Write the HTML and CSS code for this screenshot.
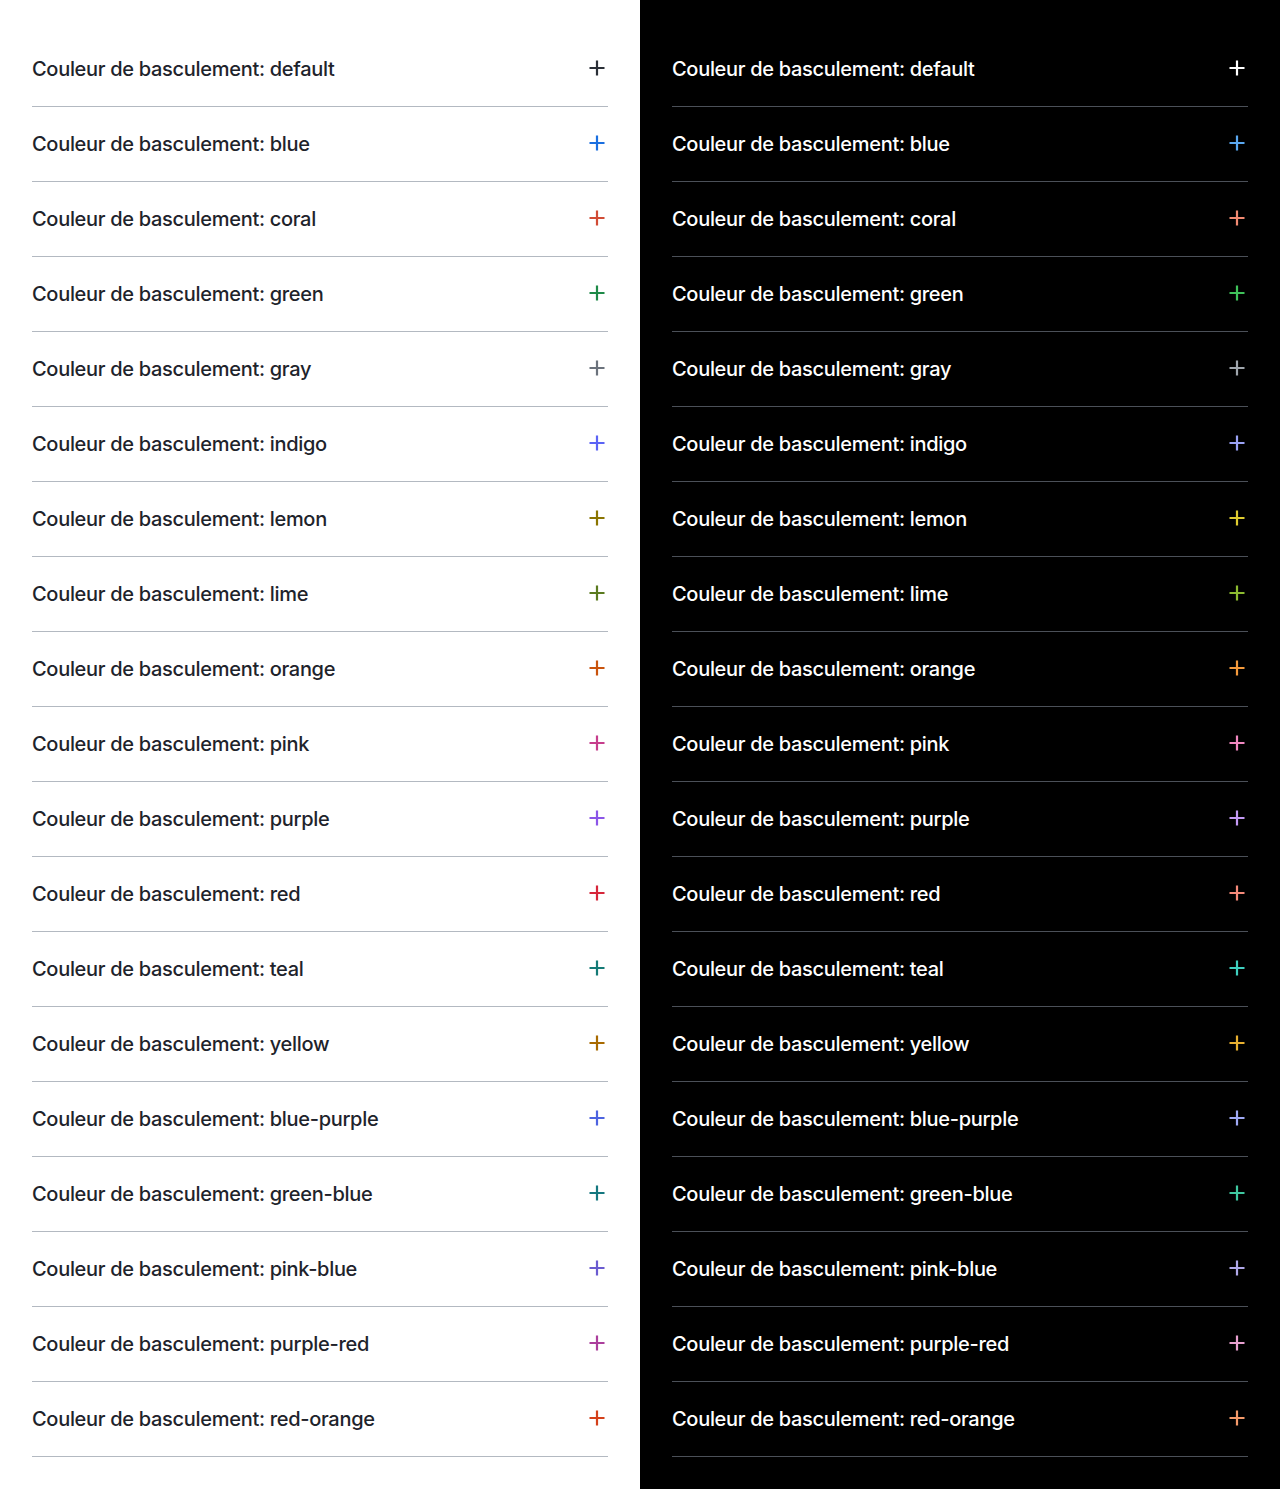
FILE: index.html
```html
<!DOCTYPE html>
<html lang="fr">
<head>
<meta charset="utf-8">
<title>Couleur de basculement</title>
<link rel="stylesheet" href="styles.css">
</head>
<body>
<div class="page">
  <section class="panel light">
    <div class="row c-default"><span class="label">Couleur de basculement: default</span><svg class="plus" viewBox="0 0 16 16"><path d="M8 0.5v15M0.5 8h15"/></svg></div>
    <div class="row c-blue"><span class="label">Couleur de basculement: blue</span><svg class="plus" viewBox="0 0 16 16"><path d="M8 0.5v15M0.5 8h15"/></svg></div>
    <div class="row c-coral"><span class="label">Couleur de basculement: coral</span><svg class="plus" viewBox="0 0 16 16"><path d="M8 0.5v15M0.5 8h15"/></svg></div>
    <div class="row c-green"><span class="label">Couleur de basculement: green</span><svg class="plus" viewBox="0 0 16 16"><path d="M8 0.5v15M0.5 8h15"/></svg></div>
    <div class="row c-gray"><span class="label">Couleur de basculement: gray</span><svg class="plus" viewBox="0 0 16 16"><path d="M8 0.5v15M0.5 8h15"/></svg></div>
    <div class="row c-indigo"><span class="label">Couleur de basculement: indigo</span><svg class="plus" viewBox="0 0 16 16"><path d="M8 0.5v15M0.5 8h15"/></svg></div>
    <div class="row c-lemon"><span class="label">Couleur de basculement: lemon</span><svg class="plus" viewBox="0 0 16 16"><path d="M8 0.5v15M0.5 8h15"/></svg></div>
    <div class="row c-lime"><span class="label">Couleur de basculement: lime</span><svg class="plus" viewBox="0 0 16 16"><path d="M8 0.5v15M0.5 8h15"/></svg></div>
    <div class="row c-orange"><span class="label">Couleur de basculement: orange</span><svg class="plus" viewBox="0 0 16 16"><path d="M8 0.5v15M0.5 8h15"/></svg></div>
    <div class="row c-pink"><span class="label">Couleur de basculement: pink</span><svg class="plus" viewBox="0 0 16 16"><path d="M8 0.5v15M0.5 8h15"/></svg></div>
    <div class="row c-purple"><span class="label">Couleur de basculement: purple</span><svg class="plus" viewBox="0 0 16 16"><path d="M8 0.5v15M0.5 8h15"/></svg></div>
    <div class="row c-red"><span class="label">Couleur de basculement: red</span><svg class="plus" viewBox="0 0 16 16"><path d="M8 0.5v15M0.5 8h15"/></svg></div>
    <div class="row c-teal"><span class="label">Couleur de basculement: teal</span><svg class="plus" viewBox="0 0 16 16"><path d="M8 0.5v15M0.5 8h15"/></svg></div>
    <div class="row c-yellow"><span class="label">Couleur de basculement: yellow</span><svg class="plus" viewBox="0 0 16 16"><path d="M8 0.5v15M0.5 8h15"/></svg></div>
    <div class="row c-blue-purple"><span class="label">Couleur de basculement: blue-purple</span><svg class="plus" viewBox="0 0 16 16"><path d="M8 0.5v15M0.5 8h15"/></svg></div>
    <div class="row c-green-blue"><span class="label">Couleur de basculement: green-blue</span><svg class="plus" viewBox="0 0 16 16"><path d="M8 0.5v15M0.5 8h15"/></svg></div>
    <div class="row c-pink-blue"><span class="label">Couleur de basculement: pink-blue</span><svg class="plus" viewBox="0 0 16 16"><path d="M8 0.5v15M0.5 8h15"/></svg></div>
    <div class="row c-purple-red"><span class="label">Couleur de basculement: purple-red</span><svg class="plus" viewBox="0 0 16 16"><path d="M8 0.5v15M0.5 8h15"/></svg></div>
    <div class="row c-red-orange"><span class="label">Couleur de basculement: red-orange</span><svg class="plus" viewBox="0 0 16 16"><path d="M8 0.5v15M0.5 8h15"/></svg></div>
  </section>
  <section class="panel dark">
    <div class="row c-default"><span class="label">Couleur de basculement: default</span><svg class="plus" viewBox="0 0 16 16"><path d="M8 0.5v15M0.5 8h15"/></svg></div>
    <div class="row c-blue"><span class="label">Couleur de basculement: blue</span><svg class="plus" viewBox="0 0 16 16"><path d="M8 0.5v15M0.5 8h15"/></svg></div>
    <div class="row c-coral"><span class="label">Couleur de basculement: coral</span><svg class="plus" viewBox="0 0 16 16"><path d="M8 0.5v15M0.5 8h15"/></svg></div>
    <div class="row c-green"><span class="label">Couleur de basculement: green</span><svg class="plus" viewBox="0 0 16 16"><path d="M8 0.5v15M0.5 8h15"/></svg></div>
    <div class="row c-gray"><span class="label">Couleur de basculement: gray</span><svg class="plus" viewBox="0 0 16 16"><path d="M8 0.5v15M0.5 8h15"/></svg></div>
    <div class="row c-indigo"><span class="label">Couleur de basculement: indigo</span><svg class="plus" viewBox="0 0 16 16"><path d="M8 0.5v15M0.5 8h15"/></svg></div>
    <div class="row c-lemon"><span class="label">Couleur de basculement: lemon</span><svg class="plus" viewBox="0 0 16 16"><path d="M8 0.5v15M0.5 8h15"/></svg></div>
    <div class="row c-lime"><span class="label">Couleur de basculement: lime</span><svg class="plus" viewBox="0 0 16 16"><path d="M8 0.5v15M0.5 8h15"/></svg></div>
    <div class="row c-orange"><span class="label">Couleur de basculement: orange</span><svg class="plus" viewBox="0 0 16 16"><path d="M8 0.5v15M0.5 8h15"/></svg></div>
    <div class="row c-pink"><span class="label">Couleur de basculement: pink</span><svg class="plus" viewBox="0 0 16 16"><path d="M8 0.5v15M0.5 8h15"/></svg></div>
    <div class="row c-purple"><span class="label">Couleur de basculement: purple</span><svg class="plus" viewBox="0 0 16 16"><path d="M8 0.5v15M0.5 8h15"/></svg></div>
    <div class="row c-red"><span class="label">Couleur de basculement: red</span><svg class="plus" viewBox="0 0 16 16"><path d="M8 0.5v15M0.5 8h15"/></svg></div>
    <div class="row c-teal"><span class="label">Couleur de basculement: teal</span><svg class="plus" viewBox="0 0 16 16"><path d="M8 0.5v15M0.5 8h15"/></svg></div>
    <div class="row c-yellow"><span class="label">Couleur de basculement: yellow</span><svg class="plus" viewBox="0 0 16 16"><path d="M8 0.5v15M0.5 8h15"/></svg></div>
    <div class="row c-blue-purple"><span class="label">Couleur de basculement: blue-purple</span><svg class="plus" viewBox="0 0 16 16"><path d="M8 0.5v15M0.5 8h15"/></svg></div>
    <div class="row c-green-blue"><span class="label">Couleur de basculement: green-blue</span><svg class="plus" viewBox="0 0 16 16"><path d="M8 0.5v15M0.5 8h15"/></svg></div>
    <div class="row c-pink-blue"><span class="label">Couleur de basculement: pink-blue</span><svg class="plus" viewBox="0 0 16 16"><path d="M8 0.5v15M0.5 8h15"/></svg></div>
    <div class="row c-purple-red"><span class="label">Couleur de basculement: purple-red</span><svg class="plus" viewBox="0 0 16 16"><path d="M8 0.5v15M0.5 8h15"/></svg></div>
    <div class="row c-red-orange"><span class="label">Couleur de basculement: red-orange</span><svg class="plus" viewBox="0 0 16 16"><path d="M8 0.5v15M0.5 8h15"/></svg></div>
  </section>
</div>
</body>
</html>
```
FILE: styles.css
```css
* { box-sizing: border-box; }
html, body { margin: 0; padding: 0; }
body { font-family: Inter, "Noto Sans", sans-serif; }
.page {
  display: grid;
  grid-template-columns: 640px 640px;
  min-height: 1489px;
}
.panel {
  padding: 32px 32px;
  display: flex;
  flex-direction: column;
}
.light { background: #ffffff; color: #1e232b; }
.dark { background: #000000; color: #ffffff; }
.row {
  height: 75px;
  display: flex;
  align-items: center;
  justify-content: space-between;
  border-bottom: 1px solid #b3b9c1;
}
.dark .row { border-bottom-color: #4b5058; }
.label {
  font-size: 20px;
  font-weight: 500;
  letter-spacing: -0.3px;
}
.plus {
  width: 16px;
  height: 16px;
  margin-right: 3px;
  margin-bottom: 3px;
  fill: none;
  stroke: currentColor;
  stroke-width: 2.2;
}
.light .c-default .plus { color: #2a2f37; }
.light .c-blue .plus { color: #1a6fe0; }
.light .c-coral .plus { color: #d14b35; }
.light .c-green .plus { color: #1e8a48; }
.light .c-gray .plus { color: #6b727c; }
.light .c-indigo .plus { color: #5b63f5; }
.light .c-lemon .plus { color: #8a7400; }
.light .c-lime .plus { color: #5a7a1f; }
.light .c-orange .plus { color: #c9530c; }
.light .c-pink .plus { color: #c63d8c; }
.light .c-purple .plus { color: #8b55e8; }
.light .c-red .plus { color: #d6263a; }
.light .c-teal .plus { color: #147a76; }
.light .c-yellow .plus { color: #a86a00; }
.light .c-blue-purple .plus { color: #4d63e0; }
.light .c-green-blue .plus { color: #14777f; }
.light .c-pink-blue .plus { color: #6a5bd0; }
.light .c-purple-red .plus { color: #ab3e9c; }
.light .c-red-orange .plus { color: #d4401a; }

.dark .c-default .plus { color: #ffffff; }
.dark .c-blue .plus { color: #5aa8f0; }
.dark .c-coral .plus { color: #f28a72; }
.dark .c-green .plus { color: #3fc25a; }
.dark .c-gray .plus { color: #a0a6ad; }
.dark .c-indigo .plus { color: #9aa2f5; }
.dark .c-lemon .plus { color: #e0cc30; }
.dark .c-lime .plus { color: #8cbb30; }
.dark .c-orange .plus { color: #f59a3c; }
.dark .c-pink .plus { color: #f088c0; }
.dark .c-purple .plus { color: #c49af5; }
.dark .c-red .plus { color: #f58a7a; }
.dark .c-teal .plus { color: #3fd0c0; }
.dark .c-yellow .plus { color: #e8b030; }
.dark .c-blue-purple .plus { color: #a0aaf5; }
.dark .c-green-blue .plus { color: #3fc8a0; }
.dark .c-pink-blue .plus { color: #b0a8e8; }
.dark .c-purple-red .plus { color: #e8a0d0; }
.dark .c-red-orange .plus { color: #f59a6a; }
```
